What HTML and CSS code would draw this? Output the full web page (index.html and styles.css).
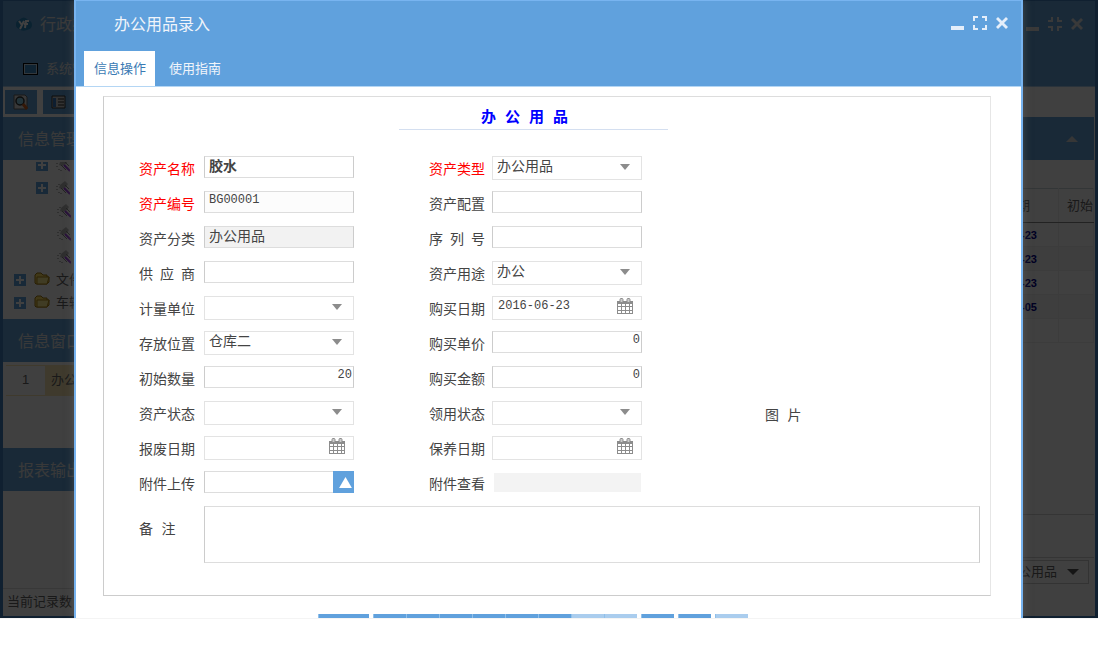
FILE: index.html
```html
<!DOCTYPE html>
<html lang="zh-CN">
<head>
<meta charset="utf-8">
<title>办公用品录入</title>
<link rel="stylesheet" href="styles.css">
</head>
<body>
<svg class="defs" aria-hidden="true">
  <symbol id="min" viewBox="0 0 14 14"><path d="M0 10h13v4H0z"/></symbol>
  <symbol id="max" viewBox="0 0 14 14"><path d="M0 0h5v2H2v3H0zM9 0h5v5h-2V2H9zM0 9h2v3h3v2H0zM12 9h2v5H9v-2h3z"/></symbol>
  <symbol id="restore" viewBox="0 0 14 14"><path d="M3 0h2v5H0V3h3zM9 0h2v3h3v2H9zM0 9h5v5H3v-3H0zM9 9h5v2h-3v3H9z"/></symbol>
  <symbol id="close" viewBox="0 0 14 14"><path d="M3 1l4 4 4-4 2 2-4 4 4 4-2 2-4-4-4 4-2-2 4-4-4-4z"/></symbol>
  <symbol id="cal" viewBox="0 0 16 16"><path d="M0 3h16v13H0z" fill="#8c8c8c"/><path d="M1 6h3v2H1zM5 6h3v2H5zM9 6h3v2H9zM13 6h2v2h-2zM1 9h3v3H1zM5 9h3v3H5zM9 9h3v3H9zM13 9h2v3h-2zM1 13h3v2H1zM5 13h3v2H5zM9 13h3v2H9zM13 13h2v2h-2z" fill="#fff"/><rect x="3" y="0.5" width="3" height="4" rx="1" fill="#ccc" stroke="#8c8c8c"/><rect x="10" y="0.5" width="3" height="4" rx="1" fill="#ccc" stroke="#8c8c8c"/></symbol>
  <symbol id="plus" viewBox="0 0 12 12"><path d="M0 0h12v12H0z" fill="#5fa2de"/><path d="M5 2h2v3h3v2H7v3H5V7H2V5h3z" fill="#fff"/></symbol>
  <symbol id="tool" viewBox="0 0 14 14"><path d="M4 4l5-4 3 3-2 3-4 2-3-1z" fill="#bbb"/><path d="M1 5v1M1 8v1M3 11v1M5 12v1M3 3v1" stroke="#777"/><path d="M8 7l6 6" stroke="#9a40e0" stroke-width="2"/><path d="M5 7l5 5M9 4l4 4" stroke="#888"/></symbol>
  <symbol id="folder" viewBox="0 0 16 14"><path d="M1 11V3l2-2h4l2 2h4v2h2v5l-2 2H2z" fill="#ffe060" stroke="#a07810"/><path d="M3 5h12l-2 7H3z" fill="#fff090" stroke="#b08818"/></symbol>
</svg>
<div class="stage">
  <div class="app">
    <header class="app-head">
      <div class="app-title">
        <svg class="logo" viewBox="0 0 16 14"><path d="M3 3Q8-2 12 3q4 1 4 5t-5 5Q6 15 3 12-1 10 0 7q0-3 3-4z" fill="#2888c0"/><path d="M3 4l3 4 2-4M6 8l-2 4M13 4H10L9 11M8 7h4" fill="none" stroke="#fff" stroke-width="2"/></svg>
        <span>行政办公</span>
        <div class="tools">
          <svg><use href="#min"/></svg><svg><use href="#restore"/></svg><svg><use href="#close"/></svg>
        </div>
      </div>
      <div class="app-menu">
        <svg class="screen" viewBox="0 0 15 12"><path d="M0 0h15v12H0z" fill="#000"/><path d="M1 1h13v10H1z" fill="#cde"/><path d="M2 2h11v8H2z" fill="#3c8cc8"/></svg>
        <span>系统管理</span>
      </div>
    </header>
    <div class="toolbar">
      <button type="button" aria-label="查询"><svg viewBox="0 0 16 16"><path d="M1 1h11l2 2v12H1z" fill="#ddd" stroke="#666"/><circle cx="7" cy="7" r="4" fill="#8cd0e8" stroke="#333" stroke-width="1.5"/><path d="M10 10l4 5" stroke="#d06020" stroke-width="3"/></svg></button>
      <button type="button" aria-label="列表"><svg viewBox="0 0 16 16"><path d="M1 2h13v12H1z" fill="#ccc" stroke="#333"/><path d="M2 4h3v9H2z" fill="#3878c0"/><path d="M7 5h6M7 8h6M7 11h6" stroke="#222"/></svg></button>
    </div>
    <div class="app-body">
      <aside class="side">
        <h2 class="band">信息管理</h2>
        <ul class="tree">
          <li class="sub"><svg class="plus"><use href="#plus"/></svg><svg class="tool"><use href="#tool"/></svg></li>
          <li class="sub"><svg class="plus"><use href="#plus"/></svg><svg class="tool"><use href="#tool"/></svg></li>
          <li class="leaf"><svg class="tool"><use href="#tool"/></svg></li>
          <li class="leaf"><svg class="tool"><use href="#tool"/></svg></li>
          <li class="leaf"><svg class="tool"><use href="#tool"/></svg></li>
          <li><svg class="plus"><use href="#plus"/></svg><svg class="folder"><use href="#folder"/></svg>文件管理</li>
          <li><svg class="plus"><use href="#plus"/></svg><svg class="folder"><use href="#folder"/></svg>车辆管理</li>
        </ul>
        <h2 class="band">信息窗口</h2>
        <div class="windows"><div class="win"><span class="num">1</span><span class="name">办公用品</span></div></div>
        <h2 class="band">报表输出</h2>
        <div class="status">当前记录数</div>
      </aside>
      <section class="main">
        <div class="band"><i class="up"></i></div>
        <table class="list">
          <thead><tr><th>购买日期</th><th class="last">初始</th></tr></thead>
          <tbody>
            <tr><td>2016-06-23</td><td></td></tr>
            <tr><td>2016-06-23</td><td></td></tr>
            <tr><td>2016-06-23</td><td></td></tr>
            <tr><td>2016-07-05</td><td></td></tr>
            <tr><td></td><td></td></tr>
          </tbody>
        </table>
        <div class="summary"></div>
        <div class="pager"><div class="picker">办公用品<i class="down"></i></div></div>
      </section>
    </div>
  </div>
  <div class="shade"></div>

  <div class="dialog" role="dialog" aria-labelledby="dlg-title">
    <header class="dlg-head">
      <h1 id="dlg-title">办公用品录入</h1>
      <div class="tools">
        <button type="button" aria-label="最小化"><svg><use href="#min"/></svg></button>
        <button type="button" aria-label="最大化"><svg><use href="#max"/></svg></button>
        <button type="button" aria-label="关闭"><svg><use href="#close"/></svg></button>
      </div>
    </header>
    <nav class="tabs">
      <button type="button" class="tab active">信息操作</button>
      <button type="button" class="tab">使用指南</button>
    </nav>
    <form class="panel">
      <h2 class="form-title">办 公 用 品</h2>
      <div class="grid">
        <label class="req" for="f1">资产名称</label><input id="f1" class="strong" value="胶水">
        <label class="req second" for="g1">资产类型</label><div class="pick"><select id="g1"><option>办公用品</option></select></div>

        <label class="req" for="f2">资产编号</label><input id="f2" class="code tint" value="BG00001" readonly>
        <label class="second" for="g2">资产配置</label><input id="g2">

        <label for="f3">资产分类</label><input id="f3" class="locked" value="办公用品" readonly>
        <label class="second" for="g3">序 列 号</label><input id="g3">

        <label for="f4">供 应 商</label><input id="f4">
        <label class="second" for="g4">资产用途</label><div class="pick"><select id="g4"><option>办公</option></select></div>

        <label for="f5">计量单位</label><div class="pick"><select id="f5"><option></option></select></div>
        <label class="second" for="g5">购买日期</label><div class="date"><input id="g5" class="code" value="2016-06-23"><svg><use href="#cal"/></svg></div>

        <label for="f6">存放位置</label><div class="pick"><select id="f6"><option>仓库二</option></select></div>
        <label class="second" for="g6">购买单价</label><input id="g6" class="amount" value="0">

        <label for="f7">初始数量</label><input id="f7" class="amount" value="20">
        <label class="second" for="g7">购买金额</label><input id="g7" class="amount" value="0">

        <label for="f8">资产状态</label><div class="pick"><select id="f8"><option></option></select></div>
        <label class="second" for="g8">领用状态</label><div class="pick"><select id="g8"><option></option></select></div>
        <span class="picture">图 片</span>

        <label for="f9">报废日期</label><div class="date"><input id="f9"><svg><use href="#cal"/></svg></div>
        <label class="second" for="g9">保养日期</label><div class="date"><input id="g9"><svg><use href="#cal"/></svg></div>

        <label for="f10">附件上传</label><div class="upload"><input id="f10"><button type="button" aria-label="上传"><svg viewBox="0 0 14 12"><path d="M7 0l7 12H0z" fill="#fff"/></svg></button></div>
        <span class="label second">附件查看</span><div class="viewer"></div>
      </div>
      <div class="remark"><label for="note">备 注</label><textarea id="note"></textarea></div>
    </form>
    <footer class="actions">
      <button type="button" class="wide" aria-label="操作"></button>
      <div class="group">
        <button type="button" aria-label="首条"></button><button type="button" aria-label="上条"></button><button type="button" aria-label="下条"></button><button type="button" aria-label="末条"></button><button type="button" aria-label="新增"></button><button type="button" aria-label="修改"></button><button type="button" aria-label="保存" disabled></button><button type="button" aria-label="取消" disabled></button>
      </div>
      <button type="button" aria-label="删除"></button>
      <button type="button" aria-label="打印"></button>
      <button type="button" aria-label="审核" disabled></button>
    </footer>
  </div>
</div>
</body>
</html>
```
FILE: styles.css
```css
* { box-sizing: border-box; }
body { margin: 0; background: #fff; color: #444; font: 13px/20px "Liberation Sans", "Noto Sans CJK SC", sans-serif; overflow: hidden; }
h1, h2, ul { margin: 0; padding: 0; font-weight: normal; }
ul { list-style: none; }
button, input, select, textarea { font: inherit; color: inherit; border-radius: 0; margin: 0; }
button { padding: 0; border: 0; background: none; }
.defs { position: absolute; width: 0; height: 0; }
.stage { position: relative; height: calc(100vh - 36px); overflow: hidden; border-bottom: 1px solid #f4f4f4; }

/* application behind the dialog */
.app { display: flex; flex-direction: column; height: 100%; border: solid #4080c0; border-width: 1px 3px 2px 3px; color: #666; }
.app-head { background: #65a4dc; color: #e4e4e4; border-bottom: 1px solid #a8ccec; }
.app-title { display: flex; align-items: center; gap: 8px; height: 45px; padding: 0 11px 0 13px; font-size: 16px; }
.app-title span { padding-top: 2px; }
.logo { width: 16px; height: 14px; }
.app-title .tools { margin-left: auto; color: #e4e4e4; }
.tools { display: flex; gap: 8px; }
.tools svg { display: block; width: 14px; height: 14px; fill: currentColor; }
.app-menu { display: flex; align-items: center; gap: 8px; height: 40px; padding: 5px 20px 0; }
.screen { width: 15px; height: 12px; }
.toolbar { display: flex; gap: 6px; height: 30px; padding: 3px 2px; background: #fff; }
.toolbar button { display: flex; align-items: center; justify-content: center; width: 32px; height: 24px; background: #65a4dc; }
.toolbar svg { width: 16px; height: 16px; }
.app-body { display: flex; flex: 1; min-height: 0; background: #fff; }
.side { display: flex; flex-direction: column; width: 240px; }
.band { flex: none; height: 43px; padding-left: 15px; background: #65a4dc; color: #e4e4e4; font-size: 16px; line-height: 46px; }
.tree { height: 157px; margin-top: 2px; overflow: hidden; }
.tree li { display: flex; align-items: center; gap: 8px; height: 23px; padding-left: 11px; }
.tree li:first-child { margin-top: -9px; }
.tree .sub { padding-left: 33px; }
.tree .leaf { padding-left: 54px; }
.plus { width: 12px; height: 12px; }
.tool { width: 14px; height: 14px; }
.folder { width: 16px; height: 14px; margin: 0 -2px 2px 0; }
.windows { height: 86px; padding: 3px; }
.win { display: flex; height: 31px; line-height: 28px; border: solid #fbe7b4; border-width: 1px 0; }
.num { width: 39px; text-align: center; }
.name { flex: 1; padding-left: 6px; background: #fbe7b4; }
.status { margin-top: auto; height: 28px; padding: 3px 4px; border-top: 1px solid #ddd; }
.main { display: flex; flex: 1; flex-direction: column; min-width: 0; padding-right: 1px; overflow: hidden; }
.main .band { display: flex; align-items: center; justify-content: flex-end; padding-right: 16px; }
.up { border: 6px solid transparent; border-top: 0; border-bottom-color: #d8d8d8; }
.down { border: 6px solid transparent; border-bottom: 0; border-top-color: #555; }
.list { width: 100%; margin-top: 28px; border-collapse: collapse; table-layout: fixed; border-top: 1px solid #ccd8dc; text-align: right; }
.list th { height: 34px; padding: 0 28px 0 0; font-weight: normal; border-bottom: 1px solid #888; }
.list th, .list td { border-right: 1px solid #eee; white-space: nowrap; overflow: hidden; }
.list .last { width: 35px; padding: 0 0 0 8px; text-align: left; }
.list td { height: 24px; padding: 0 21px 0 0; color: #00008b; font-size: 11px; font-weight: bold; border-bottom: 1px solid #eee; }
.list tr:nth-child(even) td { background: #f5f5f5; }
.summary { height: 44px; margin-top: auto; border: solid #d4d4d4; border-width: 1px 0; }
.pager { height: 58px; padding: 2px 5px 0; }
.picker { display: flex; align-items: center; justify-content: flex-end; gap: 10px; height: 24px; padding-right: 9px; border: 1px solid #ccc; }
.shade { position: absolute; inset: 0; background: rgba(0, 0, 0, .75); }

/* dialog */
.dialog { position: absolute; top: 0; bottom: 0; left: 74px; right: 75px; display: flex; flex-direction: column; overflow: hidden; background: #fff; border: 2px solid #78b4f0; border-width: 1px 2px 0; box-shadow: 0 0 8px rgba(100, 100, 100, .6); }
.dlg-head { flex: none; display: flex; align-items: center; justify-content: space-between; height: 44px; padding: 4px 12px 0 38px; background: #60a1dd; color: #f0f4fa; }
.dlg-head h1 { font-size: 16px; }
.dlg-head .tools { padding-bottom: 5px; color: #e4eefa; }
.tabs { flex: none; display: flex; align-items: flex-end; height: 42px; padding: 0 8px; background: #60a1dd; border-bottom: 1px solid #b4d6f4; }
.tab { height: 35px; padding: 1px 9px 0 10px; color: #f0f4fa; }
.tab.active { color: #3a7ab4; background: #fff; }
.tab + .tab { margin-left: 4px; }
.panel { flex: none; margin: 9px 30px 0 27px; padding: 10px 10px 32px 35px; border: 1px solid #ccc; border-top-color: #ddd; border-right-color: #e6e6e6; font-family: "Liberation Mono", "Noto Sans CJK SC", monospace; font-size: 14px; }
.form-title { width: 269px; height: 23px; margin: 0 0 26px 260px; padding: 2px 18px 0 0; border-bottom: 1px solid #d4dff0; color: #00f; font-size: 15px; font-weight: bold; text-align: center; }
.grid { display: grid; grid-template-columns: 65px 150px 138px 150px 1fr; grid-auto-rows: 35px; align-items: start; }
.grid label, .label { grid-column: 1; width: 56px; line-height: 28px; font-family: "Liberation Serif", "Noto Sans CJK SC", serif; text-align-last: justify; white-space: nowrap; }
.grid .second { grid-column: 3; margin-left: 75px; }
.grid .req { color: #f00; }
.grid input { width: 150px; height: 22px; padding: 0 4px 4px; border: 1px solid #ccc; border-top-color: #ddd; border-bottom-color: #ddd; background: #fff; outline: 0; }
.grid .strong { font-weight: bold; }
.grid .code { font-size: 12px; }
.grid .tint { background: #fcfcfc; }
.grid .locked { background: #f2f2f2; }
.grid .amount { padding-right: 1px; font-size: 12px; text-align: right; }
.pick, .date { position: relative; height: 24px; }
.pick select { display: block; appearance: none; width: 100%; height: 24px; padding: 0 24px 6px 4px; border: 1px solid #e3e3e3; background: #fff; outline: 0; }
.pick::after { content: ""; position: absolute; top: 8px; right: 12px; border: 5px solid transparent; border-top: 6px solid #8c8c8c; border-bottom: 0; pointer-events: none; }
.date input { display: block; height: 24px; padding: 0 24px 4px 5px; border-color: #e3e3e3; }
.date svg { position: absolute; top: 2px; right: 9px; width: 16px; height: 16px; }
.picture { grid-column: 5; margin-left: 123px; line-height: 30px; }
.upload { display: flex; }
.grid .upload input { flex: 1; width: auto; min-width: 0; border-right: 0; }
.upload button { display: flex; align-items: center; justify-content: center; width: 21px; height: 22px; padding-left: 4px; background: #60a1dd; }
.upload svg { width: 13px; height: 11px; }
.viewer { height: 19px; margin: 2px 1px 0 2px; background: #f3f3f3; }
.remark { display: flex; }
.remark label { width: 65px; line-height: 48px; }
.remark textarea { flex: 1; min-width: 0; height: 57px; border: 1px solid #ccc; border-color: #ddd #ccc; resize: none; outline: 0; }
.actions { flex: none; display: flex; justify-content: center; gap: 4px; padding: 18px 31px 0 0; }
.actions button { width: 33px; height: 30px; background: #60a1dd; border-left: 1px solid #90c0ea; }
.actions .wide { width: 51px; }
.actions button:disabled { background: #aacdee; }
.group { display: flex; }
```
